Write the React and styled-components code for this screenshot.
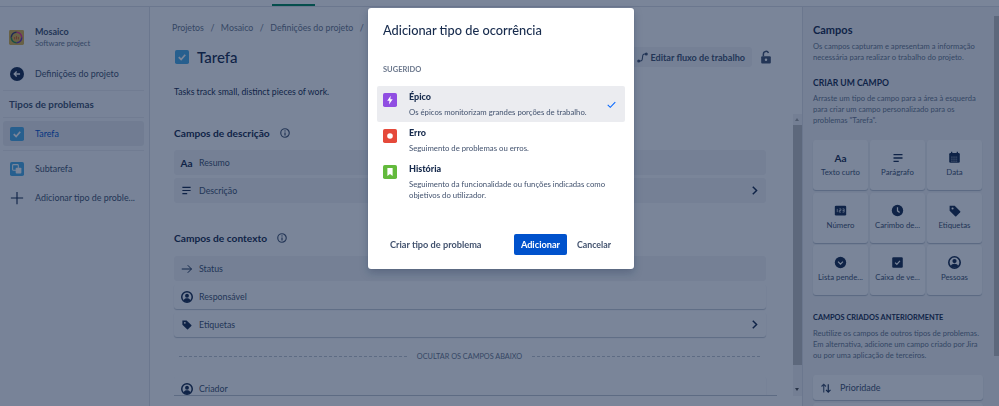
import React from 'react';
import styled, { createGlobalStyle } from 'styled-components';

const NAVY = '#172B4D';
const SLATE = '#42526E';
const FONT = 'Lato, "Noto Sans", "Liberation Sans", sans-serif';

const GlobalStyle = createGlobalStyle`
  html, body {
    margin: 0;
    height: 100%;
    overflow: hidden;
    background: #fff;
    font-family: ${FONT};
    color: ${NAVY};
  }
  * { box-sizing: border-box; }
`;

const Shell = styled.div`
  width: 999px;
  height: 406px;
  display: flex;
  flex-direction: column;
  overflow: hidden;
`;

const TopBar = styled.div`
  height: 7px;
  flex: none;
  padding-left: 272px;
  display: flex;
  align-items: flex-end;
  background: #fff;
  border-bottom: 1px solid #dfe1e6;
`;

const TopTab = styled.div`
  width: 43px;
  height: 2px;
  background: #00875a;
`;

const Body = styled.div`
  flex: 1;
  display: flex;
  min-height: 0;
`;

/* sidebar */
const Sidebar = styled.aside`
  width: 150px;
  flex: none;
  padding: 22px 5px 0 3px;
  background: #fafbfc;
  border-right: 1px solid #dfe1e6;
`;

const ProjectHead = styled.div`
  display: flex;
  align-items: center;
  gap: 11px;
  padding-left: 6px;
  height: 16px;
`;

const ProjectName = styled.div`
  font-size: 9px;
  line-height: 12px;
  font-weight: 700;
  color: ${SLATE};
`;

const ProjectKind = styled.div`
  font-size: 7.6px;
  line-height: 11px;
  color: #6b778c;
`;

const NavItem = styled.div`
  display: flex;
  align-items: center;
  gap: 11px;
  height: 25px;
  padding-left: 7px;
  margin-top: ${(p) => p.$top || 0}px;
  border-radius: 3px;
  font-size: 8.9px;
  white-space: nowrap;
  color: ${(p) => (p.$active ? '#0052CC' : SLATE)};
  background: ${(p) => (p.$active ? '#ebecf0' : 'transparent')};
`;

const NavRule = styled.div`
  height: 1px;
  background: #ebecf0;
  margin-top: ${(p) => p.$top}px;
`;

const NavHeading = styled.div`
  margin-top: 6px;
  padding-left: 6px;
  font-size: 9.8px;
  line-height: 14px;
  font-weight: 700;
  color: ${SLATE};
`;

/* main column */
const Main = styled.main`
  position: relative;
  width: 652px;
  flex: none;
  padding: 13px 36px 0 22px;
  background: #fff;
  overflow: hidden;
`;

const Crumbs = styled.div`
  font-size: 8.8px;
  line-height: 16px;
  color: #6b778c;
  white-space: nowrap;
  span { margin: 0 6.5px; }
`;

const TitleRow = styled.div`
  display: flex;
  align-items: center;
  height: 28px;
  margin-top: 7px;
  padding-left: 3px;
`;

const PageTitle = styled.h1`
  margin: 0 0 0 8px;
  font-size: 15px;
  font-weight: 500;
  color: ${NAVY};
`;

const EditButton = styled.div`
  margin-left: auto;
  display: flex;
  align-items: center;
  gap: 2px;
  height: 20px;
  padding: 0 7px 0 10px;
  border-radius: 3px;
  background: #f4f5f7;
  font-size: 9.1px;
  font-weight: 700;
  color: ${SLATE};
  white-space: nowrap;
`;

const LockWrap = styled.div`
  display: flex;
  margin: 0 -7px 0 7px;
`;

const Description = styled.p`
  margin: 13px 0 0 2px;
  font-size: 8.7px;
  line-height: 16px;
  color: ${NAVY};
`;

const SectionHead = styled.div`
  display: flex;
  align-items: center;
  gap: 10px;
  height: 18px;
  margin: ${(p) => p.$top}px 0 0 2px;
  font-size: 10.2px;
  font-weight: 700;
  color: ${NAVY};
`;

const FieldRows = styled.div`
  display: flex;
  flex-direction: column;
  gap: 3px;
  margin: ${(p) => p.$top}px 0 0 2px;
`;

const FieldRow = styled.div`
  display: flex;
  align-items: center;
  height: 25px;
  flex: none;
  padding: 0 6px 0 7px;
  border-radius: 3px;
  font-size: 8.8px;
  color: ${SLATE};
  background: ${(p) => (p.$raised ? '#fff' : '#f4f5f7')};
  box-shadow: ${(p) => (p.$raised ? '0 1px 1px rgba(9, 30, 66, 0.25)' : 'none')};
`;

const FieldIcon = styled.span`
  width: 11px;
  height: 14px;
  margin-right: 7px;
  display: flex;
  align-items: center;
  justify-content: center;
  font-size: 10px;
  font-weight: 700;
  color: ${NAVY};
`;

const RowChevron = styled.span`
  margin-left: auto;
  display: flex;
`;

const HideDivider = styled.div`
  display: flex;
  align-items: center;
  gap: 10px;
  height: 14px;
  margin: 12px 6px 0 7px;
  font-size: 7.3px;
  color: #6b778c;
  white-space: nowrap;
  &::before, &::after {
    content: '';
    flex: 1;
    border-top: 1px dashed #c1c7d0;
  }
`;

const ClippedRows = styled.div`
  height: 20px;
  margin: 13px -11px 0 2px;
  overflow: hidden;
  border-bottom: 1px solid #c1c7d0;
  ${FieldRow} { width: 592px; }
`;

const ScrollTrack = styled.div`
  position: absolute;
  top: 107px;
  right: 0;
  width: 9px;
  height: 282px;
  display: flex;
  flex-direction: column;
  align-items: center;
  background: #f1f2f4;
`;

const ScrollThumb = styled.div`
  width: 100%;
  height: 240px;
  margin-top: 11px;
  background: #c1c1c1;
`;

const ScrollArrow = styled.div`
  position: absolute;
  left: 2px;
  ${(p) => (p.$down ? 'bottom: 5px; border-top: 3px solid #505050;' : 'top: 4px; border-bottom: 3px solid #a3a3a3;')}
  border-left: 2.5px solid transparent;
  border-right: 2.5px solid transparent;
`;

/* right panel */
const Panel = styled.aside`
  position: relative;
  flex: 1;
  padding: 15px 15px 0 10px;
  background: #f4f5f7;
  border-left: 1px solid #dfe1e6;
  overflow: hidden;
`;

const PanelTitle = styled.div`
  font-size: 11px;
  line-height: 16px;
  font-weight: 700;
  color: ${NAVY};
`;

const PanelText = styled.p`
  margin: 3px 0 0;
  font-size: 7.6px;
  line-height: 11px;
  white-space: nowrap;
  color: #6b778c;
`;

const PanelHeading = styled.div`
  margin-top: ${(p) => p.$top}px;
  font-size: ${(p) => p.$size}px;
  line-height: 14px;
  font-weight: 700;
  color: ${NAVY};
  white-space: nowrap;
`;

const FieldGrid = styled.div`
  display: grid;
  grid-template-columns: repeat(3, 55px);
  grid-auto-rows: 50px;
  gap: 2.5px 2px;
  margin-top: 14px;
`;

const FieldCard = styled.div`
  display: flex;
  flex-direction: column;
  align-items: center;
  padding-top: 10px;
  border-radius: 3px;
  background: #fff;
  box-shadow: 0 1px 1px rgba(9, 30, 66, 0.25);
  font-size: 7.8px;
  line-height: 10px;
  color: ${SLATE};
  white-space: nowrap;
`;

const CardIcon = styled.span`
  height: 15px;
  margin-bottom: 2px;
  display: flex;
  align-items: center;
  font-size: 10px;
  font-weight: 700;
  color: ${NAVY};
`;

const PanelRows = styled.div`
  display: flex;
  flex-direction: column;
  gap: 3px;
  width: 170px;
  margin-top: 14px;
`;

const PanelRow = styled.div`
  display: flex;
  align-items: center;
  gap: 8px;
  height: 25px;
  flex: none;
  padding-left: 7px;
  border-radius: 3px;
  background: #fff;
  box-shadow: 0 1px 1px rgba(9, 30, 66, 0.25);
  font-size: 9px;
  color: ${SLATE};
`;

const PanelScroll = styled.div`
  position: absolute;
  top: 9px;
  right: 0;
  width: 5px;
  height: 340px;
  background: #c1c1c1;
`;

/* modal */
const Overlay = styled.div`
  position: fixed;
  inset: 0;
  padding: 8px 0 0 368px;
  background: rgba(9, 30, 66, 0.54);
`;

const Modal = styled.div`
  width: 266px;
  height: 261px;
  padding: 13px 9px 0;
  display: flex;
  flex-direction: column;
  border-radius: 3px;
  background: #fff;
  box-shadow: 0 0 1px rgba(9, 30, 66, 0.3), 0 4px 8px rgba(9, 30, 66, 0.25);
`;

const ModalTitle = styled.h2`
  margin: 0 0 0 6px;
  font-size: 12.8px;
  line-height: 18px;
  font-weight: 500;
  color: ${NAVY};
`;

const SuggestedLabel = styled.div`
  margin: 25px 0 10px 6px;
  font-size: 7.5px;
  line-height: 12px;
  font-weight: 700;
  color: #6b778c;
`;

const TypeOption = styled.div`
  display: flex;
  align-items: flex-start;
  gap: 12px;
  padding: 5px 8px 4px 6px;
  min-height: 36px;
  border-radius: 2px;
  background: ${(p) => (p.$selected ? '#ebecf0' : 'transparent')};
`;

const TypeIcon = styled.span`
  flex: none;
  display: flex;
  width: 14px;
  margin-top: 2px;
`;

const TypeText = styled.div`
  flex: 1;
`;

const TypeName = styled.div`
  font-size: 9px;
  line-height: 12px;
  font-weight: 900;
  color: ${NAVY};
`;

const TypeDesc = styled.div`
  margin-top: 4px;
  font-size: 7.75px;
  line-height: 11px;
  color: ${SLATE};
`;

const CheckMark = styled.span`
  display: flex;
  align-self: center;
`;

const ModalFooter = styled.div`
  margin-top: auto;
  height: 21px;
  margin-bottom: 14px;
  display: flex;
  align-items: center;
  padding: 0 14px 0 13px;
  font-size: 9.2px;
  font-weight: 700;
  color: ${SLATE};
  white-space: nowrap;
`;

const PrimaryButton = styled.div`
  margin-left: auto;
  width: 53px;
  height: 21px;
  display: flex;
  align-items: center;
  justify-content: center;
  border-radius: 2px;
  background: #0052cc;
  color: #fff;
`;

const CancelLink = styled.div`
  margin-left: 10px;
  font-size: 8.8px;
`;

/* drawings */
const Ico = ({ size = 14, box = 16, children }) => (
  <svg width={size} height={size} viewBox={`0 0 ${box} ${box}`} style={{ display: 'block', flex: 'none' }}>
    {children}
  </svg>
);

const ProjectLogo = () => (
  <Ico size={15}>
    <rect width="16" height="16" rx="1.5" fill="#d8b04a" />
    <path d="M8 2.4A5.6 5.6 0 0 1 13.6 8" stroke="#e8318a" strokeWidth="1.6" fill="none" />
    <path d="M13.6 8A5.6 5.6 0 0 1 8 13.6" stroke="#6d2fb0" strokeWidth="1.6" fill="none" />
    <path d="M8 13.6A5.6 5.6 0 0 1 2.4 8" stroke="#2f8a4a" strokeWidth="1.6" fill="none" />
    <path d="M2.4 8A5.6 5.6 0 0 1 8 2.4" stroke="#3a3a6a" strokeWidth="1.6" fill="none" />
    <path d="M6 10V7.5M8 10V6.5M10 10V7.5" stroke="#d9541e" strokeWidth="1" />
  </Ico>
);

const BackIcon = () => (
  <Ico size={14}>
    <circle cx="8" cy="8" r="8" fill={NAVY} />
    <path d="M11.5 8H5M7.6 5.2 4.8 8l2.8 2.8" stroke="#fff" strokeWidth="1.5" fill="none" />
  </Ico>
);

const TaskIcon = ({ size = 14 }) => (
  <Ico size={size}>
    <rect width="16" height="16" rx="2" fill="#4bade8" />
    <path d="M4.3 8.2 7 10.8l4.7-5.4" stroke="#fff" strokeWidth="2" fill="none" />
  </Ico>
);

const SubtaskIcon = () => (
  <Ico size={14}>
    <rect width="16" height="16" rx="2" fill="#4bade8" />
    <rect x="3" y="3" width="6.5" height="6.5" rx="1" fill="none" stroke="#fff" strokeWidth="1.2" />
    <rect x="6.5" y="6.5" width="6.5" height="6.5" rx="1" fill="#fff" />
  </Ico>
);

const PlusIcon = () => (
  <Ico size={14}>
    <path d="M8 1v14M1 8h14" stroke={NAVY} strokeWidth="1.3" />
  </Ico>
);

const InfoIcon = () => (
  <Ico size={10}>
    <circle cx="8" cy="8" r="6.8" fill="none" stroke={SLATE} strokeWidth="1.8" />
    <path d="M8 7v5" stroke={SLATE} strokeWidth="2" />
    <circle cx="8" cy="4.6" r="1.1" fill={SLATE} />
  </Ico>
);

const ParagraphIcon = ({ size = 12 }) => (
  <Ico size={size}>
    <path d="M2 3.5h12M2 8h12M2 12.5h7" stroke={NAVY} strokeWidth="1.8" />
  </Ico>
);

const ArrowIcon = () => (
  <Ico size={12}>
    <path d="M1 8h13M9 3l5 5-5 5" stroke={NAVY} strokeWidth="1.3" fill="none" />
  </Ico>
);

const PersonIcon = ({ size = 12 }) => (
  <Ico size={size}>
    <circle cx="8" cy="8" r="7" fill="none" stroke={NAVY} strokeWidth="2" />
    <circle cx="8" cy="6.3" r="2.6" fill={NAVY} />
    <path d="M3.4 12.6C4 10.4 6 9.6 8 9.6s4 .8 4.6 3A7 7 0 0 1 3.4 12.6Z" fill={NAVY} />
  </Ico>
);

const TagIcon = ({ size = 11 }) => (
  <Ico size={size}>
    <path d="M2 2h6.2L15 8.8a1 1 0 0 1 0 1.4L10.2 15a1 1 0 0 1-1.4 0L2 8.2Z" fill={NAVY} />
    <circle cx="5.6" cy="5.6" r="1.3" fill="#fff" />
  </Ico>
);

const ChevronIcon = () => (
  <Ico size={11}>
    <path d="M5.5 2.5 11 8l-5.5 5.5" stroke={NAVY} strokeWidth="2.2" fill="none" />
  </Ico>
);

const WorkflowIcon = () => (
  <Ico size={11}>
    <circle cx="2.5" cy="13" r="2.2" fill={SLATE} />
    <circle cx="13.5" cy="3" r="2.2" fill={SLATE} />
    <path d="M3 13h2c3 0 3-2 3-5s0-5 3-5h2" stroke={SLATE} strokeWidth="1.5" fill="none" />
  </Ico>
);

const LockIcon = () => (
  <Ico size={14}>
    <path d="M5 7V4.5a3 3 0 0 1 5.8-1" stroke={SLATE} strokeWidth="1.7" fill="none" />
    <rect x="2.5" y="7" width="11" height="8.5" rx="1.2" fill={SLATE} />
    <circle cx="8" cy="11.2" r="1.4" fill="#fff" />
  </Ico>
);

const CalendarIcon = () => (
  <Ico size={13}>
    <rect x="1.5" y="2.5" width="13" height="12" rx="1.5" fill={NAVY} />
    <path d="M4.5 1v3M11.5 1v3" stroke={NAVY} strokeWidth="1.6" />
    <path d="M4 7.5h8M4 10h8M4 12.5h8" stroke="#fff" strokeWidth=".8" strokeDasharray="1.6 1" />
  </Ico>
);

const NumberIcon = () => (
  <Ico size={13}>
    <rect x="1" y="2" width="14" height="12" rx="1.5" fill={NAVY} />
    <path d="M4 6v4M6.5 6h2v2h-2v2h2M10.5 6h2v4h-2M10.5 8h2" stroke="#fff" strokeWidth=".8" fill="none" />
  </Ico>
);

const ClockIcon = () => (
  <Ico size={13}>
    <circle cx="8" cy="8" r="7" fill={NAVY} />
    <path d="M8 4v4.4l2.6 2" stroke="#fff" strokeWidth="1.5" fill="none" />
  </Ico>
);

const DropdownIcon = () => (
  <Ico size={13}>
    <circle cx="8" cy="8" r="7" fill={NAVY} />
    <path d="M5 7l3 3 3-3" stroke="#fff" strokeWidth="1.5" fill="none" />
  </Ico>
);

const CheckboxIcon = () => (
  <Ico size={13}>
    <rect x="1.5" y="1.5" width="13" height="13" rx="1.5" fill={NAVY} />
    <path d="M5 8.2 7.2 10.2 11 6" stroke="#fff" strokeWidth="1.5" fill="none" />
  </Ico>
);

const PriorityIcon = () => (
  <Ico size={12}>
    <path d="M5 14V3M2 6l3-3 3 3" stroke={SLATE} strokeWidth="1.5" fill="none" />
    <path d="M11 3v10.5M8 10.5l3 3 3-3" stroke={NAVY} strokeWidth="1.5" fill="none" />
  </Ico>
);

const EpicIcon = () => (
  <Ico>
    <rect width="16" height="16" rx="2" fill="#904ee2" />
    <path d="M8.8 3 4.8 8.8h2.6L6.8 13l4.3-6H8.4Z" fill="#fff" />
  </Ico>
);

const BugIcon = () => (
  <Ico>
    <rect width="16" height="16" rx="2" fill="#e5493a" />
    <circle cx="8" cy="8" r="3.2" fill="#fff" />
  </Ico>
);

const StoryIcon = () => (
  <Ico>
    <rect width="16" height="16" rx="2" fill="#63ba3c" />
    <path d="M5 3.5h6v9L8 10.3 5 12.5Z" fill="#fff" />
  </Ico>
);

const BlueCheck = () => (
  <Ico size={11}>
    <path d="M2.5 8.5 6.2 12 13.5 4.5" stroke="#0065ff" strokeWidth="1.5" fill="none" />
  </Ico>
);

const cards = [
  { label: 'Texto curto', icon: 'Aa' },
  { label: 'Parágrafo', icon: <ParagraphIcon /> },
  { label: 'Data', icon: <CalendarIcon /> },
  { label: 'Número', icon: <NumberIcon /> },
  { label: 'Carimbo de...', icon: <ClockIcon /> },
  { label: 'Etiquetas', icon: <TagIcon size={13} /> },
  { label: 'Lista pende...', icon: <DropdownIcon /> },
  { label: 'Caixa de ve...', icon: <CheckboxIcon /> },
  { label: 'Pessoas', icon: <PersonIcon size={13} /> },
];

export default function App() {
  return (
    <Shell>
      <GlobalStyle />
      <TopBar>
        <TopTab />
      </TopBar>
      <Body>
        <Sidebar>
          <ProjectHead>
            <ProjectLogo />
            <div>
              <ProjectName>Mosaico</ProjectName>
              <ProjectKind>Software project</ProjectKind>
            </div>
          </ProjectHead>
          <NavItem $top={16}>
            <BackIcon />
            Definições do projeto
          </NavItem>
          <NavRule $top={4} />
          <NavHeading>Tipos de problemas</NavHeading>
          <NavRule $top={6} />
          <NavItem $top={3} $active>
            <TaskIcon />
            Tarefa
          </NavItem>
          <NavRule $top={4} />
          <NavItem $top={5}>
            <SubtaskIcon />
            Subtarefa
          </NavItem>
          <NavItem $top={4}>
            <PlusIcon />
            Adicionar tipo de proble...
          </NavItem>
        </Sidebar>

        <Main>
          <Crumbs>
            Projetos<span>/</span>Mosaico<span>/</span>Definições do projeto<span>/</span>Tarefa
          </Crumbs>
          <TitleRow>
            <TaskIcon />
            <PageTitle>Tarefa</PageTitle>
            <EditButton>
              <WorkflowIcon />
              Editar fluxo de trabalho
            </EditButton>
            <LockWrap>
              <LockIcon />
            </LockWrap>
          </TitleRow>
          <Description>Tasks track small, distinct pieces of work.</Description>

          <SectionHead $top={24}>
            Campos de descrição
            <InfoIcon />
          </SectionHead>
          <FieldRows $top={8}>
            <FieldRow>
              <FieldIcon>Aa</FieldIcon>
              Resumo
            </FieldRow>
            <FieldRow>
              <FieldIcon>
                <ParagraphIcon size={11} />
              </FieldIcon>
              Descrição
              <RowChevron>
                <ChevronIcon />
              </RowChevron>
            </FieldRow>
          </FieldRows>

          <SectionHead $top={26}>
            Campos de contexto
            <InfoIcon />
          </SectionHead>
          <FieldRows $top={9}>
            <FieldRow>
              <FieldIcon>
                <ArrowIcon />
              </FieldIcon>
              Status
            </FieldRow>
            <FieldRow $raised>
              <FieldIcon>
                <PersonIcon />
              </FieldIcon>
              Responsável
            </FieldRow>
            <FieldRow $raised>
              <FieldIcon>
                <TagIcon />
              </FieldIcon>
              Etiquetas
              <RowChevron>
                <ChevronIcon />
              </RowChevron>
            </FieldRow>
          </FieldRows>

          <HideDivider>OCULTAR OS CAMPOS ABAIXO</HideDivider>
          <ClippedRows>
            <FieldRow $raised>
              <FieldIcon>
                <PersonIcon />
              </FieldIcon>
              Criador
            </FieldRow>
          </ClippedRows>

          <ScrollTrack>
            <ScrollArrow />
            <ScrollThumb />
            <ScrollArrow $down />
          </ScrollTrack>
        </Main>

        <Panel>
          <PanelTitle>Campos</PanelTitle>
          <PanelText>
            Os campos capturam e apresentam a informação
            <br />
            necessária para realizar o trabalho do projeto.
          </PanelText>
          <PanelHeading $top={13} $size={8.6}>CRIAR UM CAMPO</PanelHeading>
          <PanelText>
            Arraste um tipo de campo para a área à esquerda
            <br />
            para criar um campo personalizado para os
            <br />
            problemas "Tarefa".
          </PanelText>
          <FieldGrid>
            {cards.map((card) => (
              <FieldCard key={card.label}>
                <CardIcon>{card.icon}</CardIcon>
                {card.label}
              </FieldCard>
            ))}
          </FieldGrid>
          <PanelHeading $top={16} $size={7.4}>CAMPOS CRIADOS ANTERIORMENTE</PanelHeading>
          <PanelText>
            Reutilize os campos de outros tipos de problemas.
            <br />
            Em alternativa, adicione um campo criado por Jira
            <br />
            ou por uma aplicação de terceiros.
          </PanelText>
          <PanelRows>
            <PanelRow>
              <PriorityIcon />
              Prioridade
            </PanelRow>
            <PanelRow />
          </PanelRows>
          <PanelScroll />
        </Panel>
      </Body>

      <Overlay>
        <Modal>
          <ModalTitle>Adicionar tipo de ocorrência</ModalTitle>
          <SuggestedLabel>SUGERIDO</SuggestedLabel>
          <TypeOption $selected>
            <TypeIcon>
              <EpicIcon />
            </TypeIcon>
            <TypeText>
              <TypeName>Épico</TypeName>
              <TypeDesc>Os épicos monitorizam grandes porções de trabalho.</TypeDesc>
            </TypeText>
            <CheckMark>
              <BlueCheck />
            </CheckMark>
          </TypeOption>
          <TypeOption>
            <TypeIcon>
              <BugIcon />
            </TypeIcon>
            <TypeText>
              <TypeName>Erro</TypeName>
              <TypeDesc>Seguimento de problemas ou erros.</TypeDesc>
            </TypeText>
          </TypeOption>
          <TypeOption>
            <TypeIcon>
              <StoryIcon />
            </TypeIcon>
            <TypeText>
              <TypeName>História</TypeName>
              <TypeDesc>Seguimento da funcionalidade ou funções indicadas como objetivos do utilizador.</TypeDesc>
            </TypeText>
          </TypeOption>
          <ModalFooter>
            Criar tipo de problema
            <PrimaryButton>Adicionar</PrimaryButton>
            <CancelLink>Cancelar</CancelLink>
          </ModalFooter>
        </Modal>
      </Overlay>
    </Shell>
  );
}
